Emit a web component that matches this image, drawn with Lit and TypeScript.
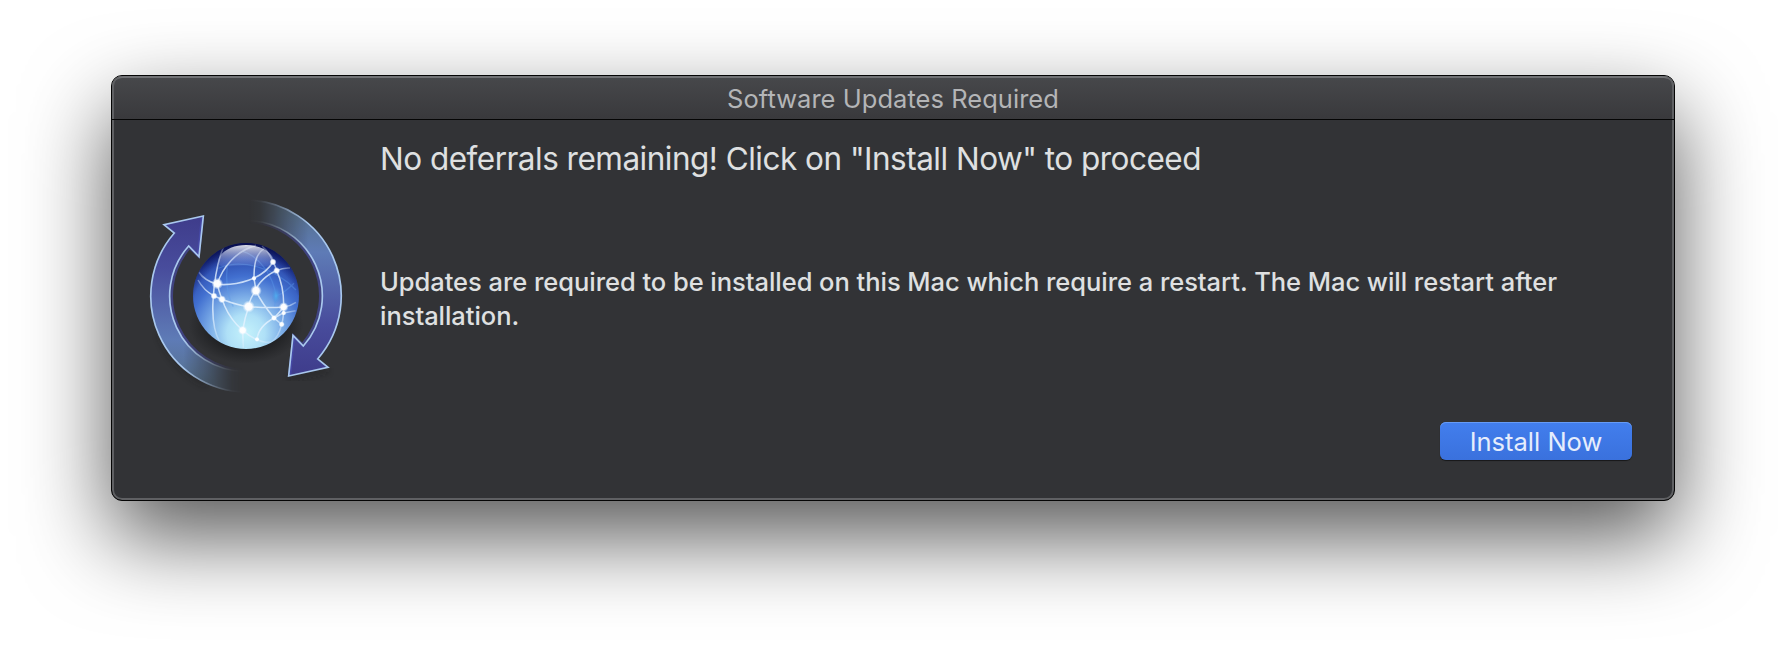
import { LitElement, html, css, svg } from "lit";
import { customElement, property } from "lit/decorators.js";

const NODES: [number, number, number][] = [
  [232, 281, 13], [348, 302, 13], [326, 350, 14], [431, 351, 11], [308, 421, 11],
  [222, 318, 8], [246, 328, 9], [342, 265, 6], [399, 216, 8], [410, 242, 8],
  [402, 384, 7], [425, 403, 7], [431, 369, 6], [351, 448, 6],
];

const LINKS = [
  "M250 172C230 220 222 280 219 335C216 390 224 430 240 458",
  "M232 283C246 232 290 182 348 166",
  "M232 283C290 288 368 268 399 216",
  "M372 176C345 192 342 230 342 265L348 302",
  "M366 168C384 182 392 198 399 216C405 226 408 234 410 242C425 275 432 310 431 351C431 372 430 388 425 403C420 425 410 445 394 457",
  "M348 302C352 280 385 250 410 242C422 236 436 233 450 234",
  "M348 302C336 316 328 334 326 350C318 372 312 396 308 421L310 474",
  "M348 302C362 335 384 362 402 384L425 403",
  "M176 246C188 264 208 276 232 283",
  "M174 270C186 292 204 308 222 318C254 332 290 346 326 350C362 353 398 354 431 351C446 349 458 344 468 337",
  "M232 281C236 306 246 326 254 348C266 376 286 402 308 421C334 444 366 462 402 456",
  "M351 448C354 420 376 398 402 384C414 378 422 372 431 369L467 362",
  "M402 384C414 372 424 360 431 351",
];

@customElement("update-icon")
class UpdateIcon extends LitElement {
  static styles = css`
    :host { display: block; }
    svg { display: block; width: 212px; height: 212px; overflow: visible; }
  `;

  private arrow() {
    return svg`
      <g mask="url(#tail)">
        <path d="M190 78L72 104L103 129A288 288 0 0 0 318 606L318 544A226 226 0 0 1 146 168L177 200Z"
          fill="url(#blade)" />
        <path d="M318 541A223 223 0 0 1 149 172L175 197L187 82" fill="none" stroke="#4a4fb4" stroke-width="9" opacity=".6" />
        <path d="M318 606A288 288 0 0 1 103 129L72 104L190 78L177 200L146 168A226 226 0 0 0 318 544" fill="none" stroke="#a9c8ee" stroke-width="5" />
      </g>`;
  }

  render() {
    return html`
      <svg viewBox="0 0 636 636" aria-hidden="true">
        <defs>
          <linearGradient id="blade" gradientUnits="userSpaceOnUse" x1="160" y1="90" x2="150" y2="570">
            <stop offset="0" stop-color="#3f3d8c" />
            <stop offset=".3" stop-color="#484c9c" />
            <stop offset=".75" stop-color="#5e7bb6" />
            <stop offset="1" stop-color="#56718f" />
          </linearGradient>
          <linearGradient id="fade" gradientUnits="userSpaceOnUse" x1="130" y1="0" x2="308" y2="0">
            <stop offset="0" stop-color="#fff" />
            <stop offset=".35" stop-color="#a0a0a0" />
            <stop offset=".62" stop-color="#484848" />
            <stop offset=".82" stop-color="#101010" />
            <stop offset="1" stop-color="#000" />
          </linearGradient>
          <linearGradient id="lower" gradientUnits="userSpaceOnUse" x1="0" y1="380" x2="0" y2="440">
            <stop offset="0" stop-color="#fff" />
            <stop offset="1" stop-color="#fff" stop-opacity="0" />
          </linearGradient>
          <mask id="tail" maskUnits="userSpaceOnUse" x="0" y="0" width="636" height="636">
            <rect width="636" height="636" fill="url(#fade)" />
            <rect width="636" height="440" fill="url(#lower)" />
          </mask>
          <radialGradient id="ball" gradientUnits="userSpaceOnUse" cx="318" cy="430" r="285">
            <stop offset="0" stop-color="#c4f2fb" />
            <stop offset=".2" stop-color="#afe0f7" />
            <stop offset=".4" stop-color="#78a9e6" />
            <stop offset=".6" stop-color="#4270d0" />
            <stop offset=".8" stop-color="#2c4bad" />
            <stop offset="1" stop-color="#0a1058" />
          </radialGradient>
          <radialGradient id="rim" gradientUnits="userSpaceOnUse" cx="318" cy="368" r="212">
            <stop offset=".76" stop-color="#0a1468" stop-opacity="0" />
            <stop offset="1" stop-color="#03063f" stop-opacity=".85" />
          </radialGradient>
          <linearGradient id="gloss" x1="0" y1="0" x2="0" y2="1">
            <stop offset="0" stop-color="#fff" stop-opacity=".85" />
            <stop offset="1" stop-color="#8fa5e8" stop-opacity=".15" />
          </linearGradient>
          <radialGradient id="glow">
            <stop offset="0" stop-color="#fff" />
            <stop offset=".55" stop-color="#fff" stop-opacity=".95" />
            <stop offset="1" stop-color="#d5eaff" stop-opacity="0" />
          </radialGradient>
          <radialGradient id="spot">
            <stop offset="0" stop-color="#4fb0ef" stop-opacity=".9" />
            <stop offset="1" stop-color="#3f8fe0" stop-opacity="0" />
          </radialGradient>
          <radialGradient id="ground">
            <stop offset=".5" stop-color="#141517" stop-opacity=".8" />
            <stop offset="1" stop-color="#141517" stop-opacity="0" />
          </radialGradient>
          <radialGradient id="reach" gradientUnits="userSpaceOnUse" cx="318" cy="318" r="159">
            <stop offset=".7" stop-color="#fff" />
            <stop offset="1" stop-color="#555" />
          </radialGradient>
          <mask id="sphere" maskUnits="userSpaceOnUse" x="150" y="150" width="336" height="336">
            <circle cx="318" cy="318" r="159" fill="url(#reach)" />
          </mask>
          <clipPath id="disc"><circle cx="318" cy="318" r="159" /></clipPath>
          <filter id="soft" x="-20%" y="-20%" width="140%" height="140%"><feGaussianBlur stdDeviation="9" /></filter>
        </defs>
        <path d="M60 430A288 288 0 0 0 200 584" fill="none" stroke="#141517" stroke-width="18" opacity=".3" filter="url(#soft)" />
        <path d="M446 566L564 540" fill="none" stroke="#141517" stroke-width="14" opacity=".4" filter="url(#soft)" />
        <ellipse cx="318" cy="405" rx="172" ry="116" fill="url(#ground)" />
        ${this.arrow()}
        <g transform="rotate(180 318 318)">${this.arrow()}</g>
        <circle cx="318" cy="318" r="159" fill="url(#ball)" />
        <g clip-path="url(#disc)">
          <circle cx="318" cy="318" r="160" fill="url(#rim)" />
          <g fill="none" stroke="#5d9bea" stroke-width="4" opacity=".4">
            <path d="M262 225C256 270 262 320 280 350" />
            <path d="M235 235C300 205 400 230 468 300" />
            <path d="M310 185C360 200 400 260 408 318L404 350" />
            <path d="M408 318C430 312 446 296 462 280" />
          </g>
          <ellipse cx="408" cy="318" rx="13" ry="24" fill="url(#spot)" />
          <g fill="none" stroke="#e6f3ff" stroke-width="4.6" opacity=".8" mask="url(#sphere)">
            ${LINKS.map((d) => svg`<path d=${d} />`)}
          </g>
          <path d="M234 212C242 182 280 165 318 165C356 165 394 182 402 212C404 240 360 226 318 226C276 226 230 240 234 212Z" fill="url(#gloss)" />
          ${NODES.map(([x, y, r]) => svg`<circle cx=${x} cy=${y} r=${r * 1.35} fill="url(#glow)" />`)}
        </g>
      </svg>`;
  }
}

@customElement("app-root")
class AppRoot extends LitElement {
  @property() heading = 'No deferrals remaining! Click on "Install Now" to proceed';
  @property() message =
    "Updates are required to be installed on this Mac which require a restart. The Mac will restart after installation.";

  static styles = css`
    :host {
      display: block;
      box-sizing: border-box;
      height: 648px;
      padding: 75px 111px 0;
      background: #fff;
      overflow: hidden;
      font-family: Inter, "Liberation Sans", sans-serif;
    }
    .window {
      box-sizing: border-box;
      display: flex;
      flex-direction: column;
      height: 426px;
      border: 1px solid #050505;
      border-radius: 11px;
      background: #323336;
      box-shadow: inset 0 0 0 2px #5f6063, 0 36px 86px rgba(0, 0, 0, 0.66);
    }
    .titlebar {
      box-sizing: border-box;
      flex: none;
      height: 44px;
      display: flex;
      align-items: center;
      justify-content: center;
      padding-top: 2px;
      border-bottom: 1px solid #050505;
      border-radius: 10px 10px 0 0;
      background: linear-gradient(#47484b, #39393c);
      box-shadow: inset 2px 0 #5f6063, inset -2px 0 #5f6063, inset 0 2px #717275;
      color: #b4b5b7;
      font-size: 25.5px;
      letter-spacing: 0.04px;
    }
    .content {
      flex: 1;
      display: grid;
      grid-template-columns: 212px 1fr;
      column-gap: 28px;
      padding: 0 42px 0 28px;
    }
    .icon { padding-top: 70px; }
    .body { display: flex; flex-direction: column; color: #dfe0e1; }
    .heading {
      margin: 19px 0 0;
      font-size: 31.5px;
      line-height: 40px;
      font-weight: 400;
      letter-spacing: -0.51px;
      white-space: nowrap;
    }
    .message {
      margin: 86px 0 0;
      width: 1200px;
      font-size: 25.5px;
      font-weight: 450;
      line-height: 34px;
      letter-spacing: -0.04px;
    }
    .actions { display: flex; justify-content: flex-end; margin-top: 89px; }
    .install {
      width: 192px;
      height: 38px;
      padding: 0;
      border: 0;
      border-radius: 6px;
      background: linear-gradient(#427eed, #3a71dd);
      box-shadow: inset 0 1px #669bf5, 0 1px 1px rgba(0, 0, 0, 0.55);
      color: #e6edfc;
      font: 400 25.5px/40px Inter, "Liberation Sans", sans-serif;
      letter-spacing: 0;
    }
  `;

  render() {
    return html`
      <section class="window" role="dialog">
        <header class="titlebar"><span class="title">Software Updates Required</span></header>
        <div class="content">
          <div class="icon"><update-icon></update-icon></div>
          <div class="body">
            <h1 class="heading">${this.heading}</h1>
            <p class="message">${this.message}</p>
            <div class="actions"><button class="install">Install Now</button></div>
          </div>
        </div>
      </section>`;
  }
}
